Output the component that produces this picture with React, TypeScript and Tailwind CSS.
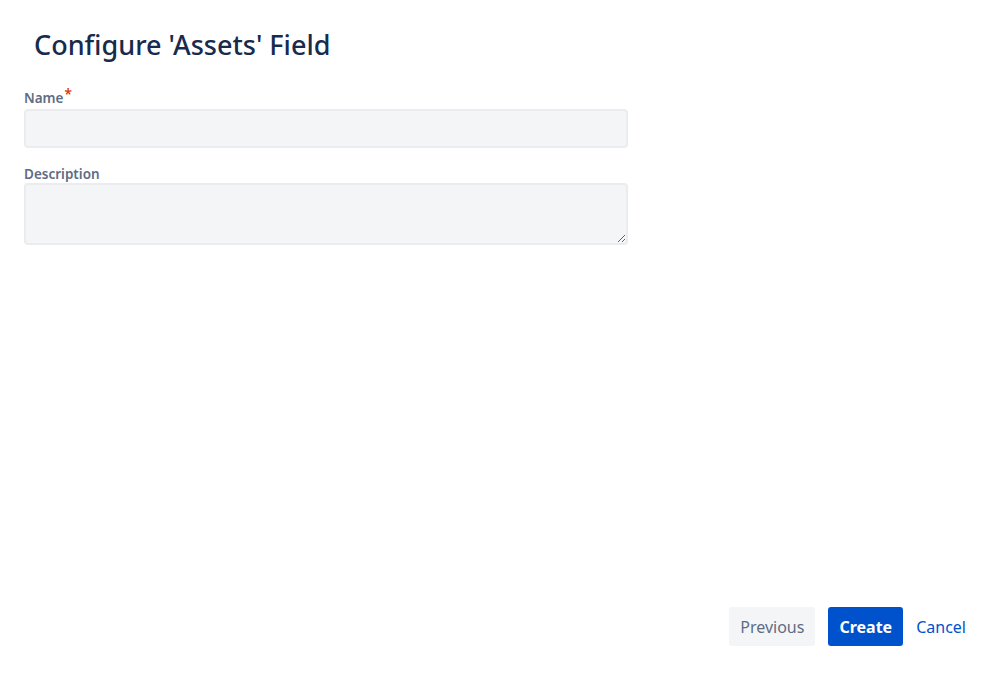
import React from 'react';

export default function App() {
  return (
    <div className="w-[999px] h-[677px] bg-white flex flex-col" style={{ fontFamily: '"Noto Sans", "Open Sans", sans-serif' }}>
      <h1 className="ml-[34px] mt-[27px] text-[27px] leading-[36px] font-medium text-[#172b4d]">Configure 'Assets' Field</h1>

      <div className="ml-[24px] mt-[26px] w-[604px] flex flex-col">
        <label className="text-[13.5px] leading-[18px] font-semibold text-[#5e6c84]">
          Name<span className="text-[#de350b] relative -top-[4px] ml-[1px]">*</span>
        </label>
        <input className="mt-[2px] h-[39px] rounded-[4px] border-2 border-[#ebecf0] bg-[#f4f5f7] outline-none px-2" />

        <label className="mt-[17px] text-[13.5px] leading-[18px] font-semibold text-[#5e6c84]">Description</label>
        <textarea className="mt-0 h-[62px] rounded-[4px] border-2 border-[#ebecf0] bg-[#f4f5f7] outline-none px-2" />
      </div>

      <div className="mt-auto mb-[31px] mr-[33px] flex justify-end items-center gap-[13px]">
        <button className="h-[39px] px-[11px] rounded-[3px] bg-[#f4f5f7] text-[16px] text-[#5e6c84]">Previous</button>
        <button className="h-[39px] px-[11px] rounded-[3px] bg-[#0052cc] text-[16px] font-bold text-white">Create</button>
        <button className="h-[39px] text-[16px] text-[#0052cc]">Cancel</button>
      </div>
    </div>
  );
}
